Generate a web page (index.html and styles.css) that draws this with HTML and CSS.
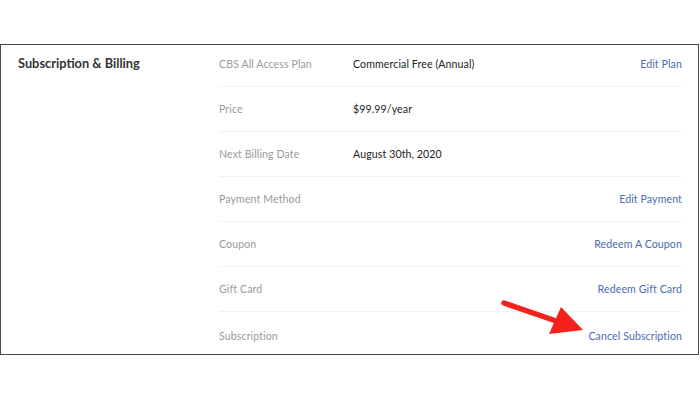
FILE: index.html
```html
<html>
<head>
	<title>Account - Subscription &amp; Billing</title>
	<link rel="stylesheet" href="styles.css">
</head>
<body>
<div class="frame">
	<div class="section-title">Subscription &amp; Billing</div>
	<div class="rows">
		<div class="row">
			<span class="label">CBS All Access Plan</span>
			<span class="value">Commercial Free (Annual)</span>
			<a class="action">Edit Plan</a>
		</div>
		<div class="row">
			<span class="label">Price</span>
			<span class="value">$99.99/year</span>
			<a class="action"></a>
		</div>
		<div class="row">
			<span class="label">Next Billing Date</span>
			<span class="value">August 30th, 2020</span>
			<a class="action"></a>
		</div>
		<div class="row">
			<span class="label">Payment Method</span>
			<span class="value"></span>
			<a class="action">Edit Payment</a>
		</div>
		<div class="row">
			<span class="label">Coupon</span>
			<span class="value"></span>
			<a class="action">Redeem A Coupon</a>
		</div>
		<div class="row">
			<span class="label">Gift Card</span>
			<span class="value"></span>
			<a class="action">Redeem Gift Card</a>
		</div>
		<div class="row last">
			<span class="label">Subscription</span>
			<span class="value"></span>
			<a class="action">Cancel Subscription</a>
		</div>
	</div>
	<svg class="arrow" width="90" height="40" viewBox="0 0 90 40">
		<line x1="5" y1="4" x2="60" y2="23" stroke="#f4221a" stroke-width="5.5" stroke-linecap="round"/>
		<polygon points="62,8 84,31 50,35" fill="#f4221a"/>
	</svg>
</div>
</body>
</html>
```

FILE: styles.css
```css
body, html {
	margin: 0;
	background: #fff;
	font-family: Lato, "Noto Sans", Arial, sans-serif;
}

.frame {
	position: relative;
	margin-top: 44px;
	width: 697px;
	height: 309px;
	border: 1.5px solid #4a4a4a;
	display: flex;
}

.section-title {
	width: 201px;
	padding: 10px 0 0 17px;
	font-size: 12.8px;
	font-weight: bold;
	color: #333;
}

.rows {
	flex: 1;
	padding-right: 16px;
}

.row {
	display: flex;
	align-items: center;
	box-sizing: border-box;
	height: 45px;
	border-bottom: 1px solid #f1f1f1;
	font-size: 10.6px;
	letter-spacing: 0.1px;
}
.row:first-child {
	height: 42px;
	padding-bottom: 3px;
}
.row.last {
	border-bottom: none;
	padding-top: 3px;
}

.label {
	width: 134px;
	color: #9a9a9a;
}
.value {
	flex: 1;
	color: #222;
}
.action {
	color: #4a6cb3;
	cursor: pointer;
}

.arrow {
	position: absolute;
	left: 498px;
	top: 254px;
}
```
